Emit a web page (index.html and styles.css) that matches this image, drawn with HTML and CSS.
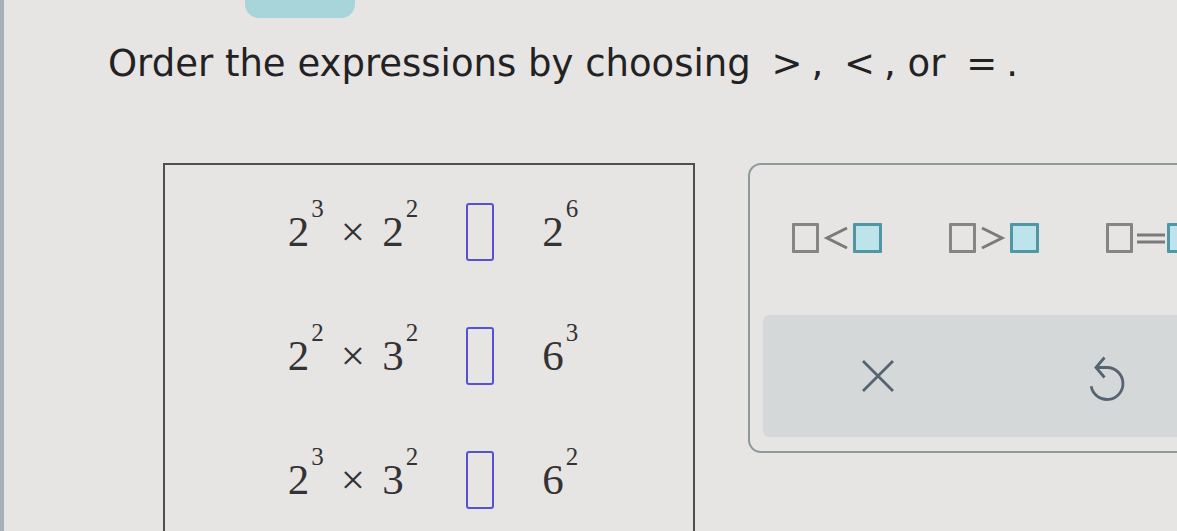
FILE: index.html
```html
<!DOCTYPE html>
<html lang="en">
  <head>
    <meta charset="UTF-8" />
    <meta name="viewport" content="width=device-width, initial-scale=1.0" />
    <title>Order the expressions</title>
    <link rel="stylesheet" href="styles.css">
  </head>
  <body>
    <div class="tab"></div>

    <h1 class="prompt">Order the expressions by choosing <span class="rel">&gt;</span>, <span class="rel">&lt;</span>, or <span class="rel">=</span>.</h1>

    <div class="work">
      <!-- 题目 -->
      <div class="problems">
        <div class="row">
          <span class="expr">2<sup>3</sup><span class="times">×</span>2<sup>2</sup></span>
          <span class="blank"></span>
          <span class="expr">2<sup>6</sup></span>
        </div>
        <div class="row">
          <span class="expr">2<sup>2</sup><span class="times">×</span>3<sup>2</sup></span>
          <span class="blank"></span>
          <span class="expr">6<sup>3</sup></span>
        </div>
        <div class="row">
          <span class="expr">2<sup>3</sup><span class="times">×</span>3<sup>2</sup></span>
          <span class="blank"></span>
          <span class="expr">6<sup>2</sup></span>
        </div>
      </div>

      <!-- 符号面板 -->
      <div class="palette">
        <div class="choices">
          <a href="javascript:;" class="choice">
            <span class="sq"></span>
            <svg class="sym" width="34" height="30" viewBox="0 0 34 30"><polyline points="28,5 8,15 28,25" /></svg>
            <span class="sq fill"></span>
          </a>
          <a href="javascript:;" class="choice">
            <span class="sq"></span>
            <svg class="sym" width="34" height="30" viewBox="0 0 34 30"><polyline points="6,5 26,15 6,25" /></svg>
            <span class="sq fill"></span>
          </a>
          <a href="javascript:;" class="choice">
            <span class="sq"></span>
            <svg class="sym" width="34" height="30" viewBox="0 0 34 30"><line x1="4" y1="12" x2="32" y2="12" /><line x1="4" y1="19" x2="32" y2="19" /></svg>
            <span class="sq fill"></span>
          </a>
        </div>

        <div class="actions">
          <button class="clear">
            <svg width="34" height="34" viewBox="0 0 34 34"><path d="M2 2 L32 32 M32 2 L2 32" /></svg>
          </button>
          <button class="undo">
            <svg width="44" height="48" viewBox="0 0 44 48"><path d="M19.5 2.5 L11 12.5 L19.5 22.5 M11 12.5 H22 A16 16 0 1 1 6.2 31.3" /></svg>
          </button>
        </div>
      </div>
    </div>
  </body>
</html>
```

FILE: styles.css
```css
* {
  margin: 0;
  padding: 0;
}

html,
body {
  height: 100%;
  overflow: hidden;
}

body {
  background-color: #e7e4e4;
  border-left: 4px solid #a4b2b5;
  font-family: "DejaVu Sans", Verdana, sans-serif;
  color: #222;
}

.tab {
  width: 110px;
  height: 18px;
  margin-left: 241px;
  background-color: #a7d5da;
  border-radius: 0 0 14px 14px;
}

.prompt {
  margin: 24px 0 0 104px;
  font-size: 37px;
  font-weight: normal;
  line-height: 44px;
  white-space: nowrap;
}

.prompt .rel {
  margin: 0 9px;
}

.work {
  display: flex;
  align-items: flex-start;
  gap: 53px;
  margin: 77px 0 0 159px;
}

/* 左边题目框 */
.problems {
  flex: none;
  width: 532px;
  height: 400px;
  box-sizing: border-box;
  border: 2px solid #4f4f4f;
  border-bottom: none;
  padding: 5px 0 0 8px;
}

.problems .row {
  display: flex;
  justify-content: center;
  align-items: center;
  height: 124px;
}

.expr {
  font-family: "Liberation Serif", "Times New Roman", serif;
  font-size: 43px;
  line-height: 58px;
  color: #333;
  white-space: nowrap;
}

.expr sup {
  font-size: 25px;
  line-height: 0;
  vertical-align: 29px;
  margin-left: 2px;
}

.expr .times {
  margin: 0 17px;
}

.blank {
  width: 28px;
  height: 58px;
  box-sizing: border-box;
  margin: 0 48px;
  border: 2px solid #5552d6;
  border-radius: 3px;
}

/* 右边符号面板 */
.palette {
  flex: none;
  width: 480px;
  box-sizing: border-box;
  border: 2px solid #8d9a9c;
  border-radius: 13px;
  padding: 58px 0 14px 13px;
}

.choices {
  display: flex;
  gap: 67px;
  padding-left: 29px;
}

.choice {
  display: flex;
  align-items: center;
  text-decoration: none;
}

.sq {
  width: 27px;
  height: 30px;
  box-sizing: border-box;
  border: 3px solid #858585;
  border-radius: 1px;
}

.sq.fill {
  width: 29px;
  background-color: #bde4ea;
  border-color: #4f97a4;
}

.sym {
  display: block;
  fill: none;
  stroke: #7a7a7a;
  stroke-width: 3;
}

.actions {
  display: flex;
  height: 122px;
  margin-top: 62px;
  background-color: #d4d8d9;
  border-radius: 6px;
}

.actions button {
  display: flex;
  justify-content: center;
  align-items: center;
  width: 229px;
  height: 100%;
  background: none;
  border: none;
  cursor: pointer;
}

.actions svg {
  fill: none;
  stroke: #566472;
  stroke-width: 2.8;
}

.actions .undo svg {
  margin-top: 5px;
}
```
